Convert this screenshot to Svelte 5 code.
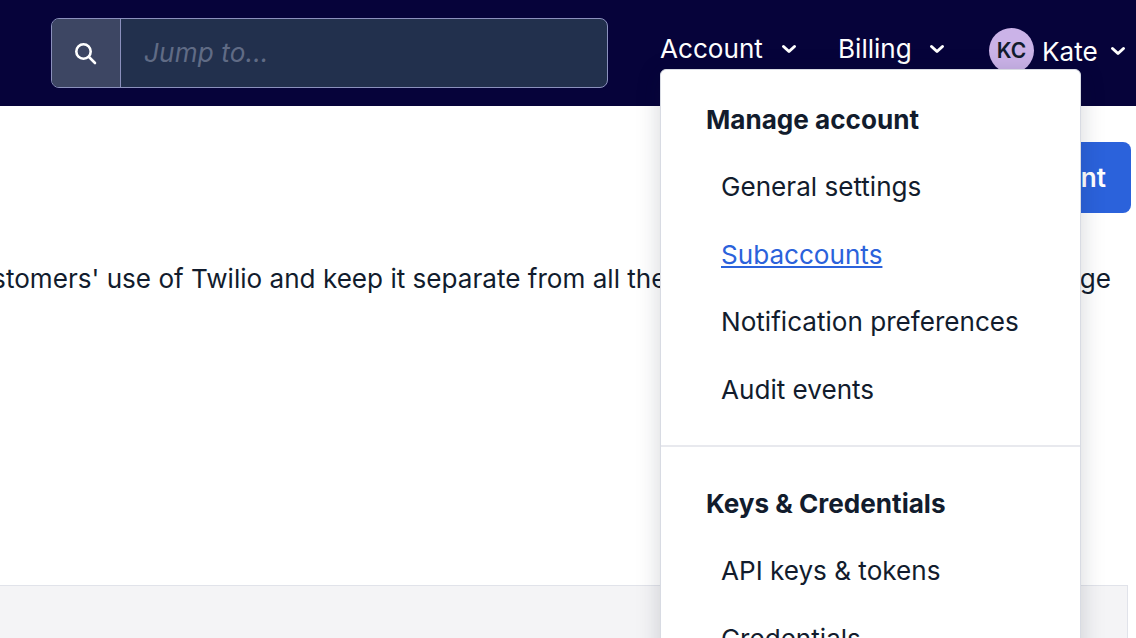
<script>
  const accountMenu = [
    { title: 'Manage account', links: ['General settings', 'Subaccounts', 'Notification preferences', 'Audit events'] },
    { title: 'Keys & Credentials', links: ['API keys & tokens', 'Credentials'] }
  ];
  const activeLink = 'Subaccounts';
</script>

{#snippet chevron()}
  <svg class="chevron" width="16" height="16" viewBox="0 0 16 16" fill="none" stroke="currentColor" stroke-width="3" stroke-linecap="round" stroke-linejoin="round">
    <path d="M2.5 5.5 8 10.5l5.5-5" />
  </svg>
{/snippet}

<div class="page">
  <header class="topbar">
    <div class="search">
      <div class="search-icon">
        <svg width="26" height="26" viewBox="0 0 26 26" fill="none" stroke="currentColor" stroke-width="2.6" stroke-linecap="round">
          <circle cx="11.5" cy="11.5" r="7.2" />
          <path d="M17 17l6 6" />
        </svg>
      </div>
      <span class="placeholder">Jump to...</span>
    </div>
    <nav class="nav">
      <button class="nav-item account"><span>Account</span>{@render chevron()}</button>
      <button class="nav-item billing"><span>Billing</span>{@render chevron()}</button>
      <button class="nav-item user">
        <span class="avatar">KC</span><span class="user-name">Kate</span>{@render chevron()}
      </button>
    </nav>
  </header>

  <main class="content">
    <div class="actions">
      <button class="primary">Create new subaccount</button>
    </div>
    <div class="intro">
      <span class="intro-left">Use subaccounts to track your customers' use of Twilio and keep it separate from all the</span>
      <span class="intro-right">manage</span>
    </div>
    <div class="table-head"></div>
  </main>

  <div class="dropdown">
    {#each accountMenu as section}
      <section class="menu-section">
        <h3>{section.title}</h3>
        <ul>
          {#each section.links as link}
            <li><a href="#top" class:active={link === activeLink}>{link}</a></li>
          {/each}
        </ul>
      </section>
    {/each}
  </div>
</div>

<style>
  :global(body) {
    margin: 0;
    overflow: hidden;
  }

  .page {
    position: relative;
    width: 1136px;
    height: 638px;
    overflow: hidden;
    background: #fff;
    font-family: Inter, "Liberation Sans", sans-serif;
    font-size: 26.1px;
    color: #121c2d;
  }

  .topbar {
    display: flex;
    height: 106px;
    box-sizing: border-box;
    padding: 18px 0 0 51px;
    background: #06033a;
    color: #fff;
  }

  .search {
    display: flex;
    width: 557px;
    height: 70px;
    box-sizing: border-box;
    border: 1.5px solid #8b90bd;
    border-radius: 8px;
    background: #22304d;
    overflow: hidden;
  }

  .search-icon {
    display: flex;
    align-items: center;
    justify-content: center;
    width: 69px;
    flex-shrink: 0;
    padding-right: 3px;
    box-sizing: border-box;
    border-right: 1.5px solid #8b90bd;
    background: #3d4663;
    color: #fff;
  }

  .placeholder {
    align-self: center;
    margin: 0 0 2px 23px;
    font-style: italic;
    letter-spacing: 0.15px;
    color: #606b85;
  }

  .nav {
    display: flex;
    align-items: flex-start;
    margin-left: 52px;
  }

  .nav-item {
    display: flex;
    align-items: center;
    padding: 0;
    border: 0;
    background: none;
    color: inherit;
    font: inherit;
  }

  .account {
    width: 178px;
    margin-top: 15px;
  }

  .billing {
    width: 151px;
    margin-top: 15px;
  }

  .account .chevron {
    margin-left: 18px;
  }

  .billing .chevron {
    margin-left: 17px;
  }

  .user {
    margin-top: 10px;
  }

  .user-name {
    margin-top: 1px;
  }

  .user .chevron {
    margin-left: 12px;
  }

  .avatar {
    display: flex;
    align-items: center;
    justify-content: center;
    width: 45px;
    height: 45px;
    margin-right: 8px;
    border-radius: 50%;
    background: #cbb3e8;
    color: #121c2d;
    font-size: 21px;
    font-weight: 600;
  }

  .content {
    display: flex;
    flex-direction: column;
    height: 532px;
  }

  .actions {
    display: flex;
    justify-content: flex-end;
    padding: 36px 5px 0 0;
  }

  .primary {
    height: 71px;
    padding: 0 25px;
    border: 0;
    border-radius: 8px;
    background: #2b62db;
    color: #fff;
    font: inherit;
    font-weight: 600;
  }

  .intro {
    display: flex;
    justify-content: space-between;
    margin-top: 46px;
    padding-right: 25px;
    line-height: 40px;
    white-space: nowrap;
  }

  .intro-left {
    margin-left: -423px;
  }

  .table-head {
    flex: 1;
    margin: 286px 8px 0 0;
    border-top: 1.5px solid #e1e3ea;
    border-right: 1.5px solid #e1e3ea;
    background: #f4f4f6;
  }

  .dropdown {
    position: absolute;
    top: 69px;
    left: 660px;
    width: 421px;
    height: 640px;
    box-sizing: border-box;
    border: 1px solid #d8dbe3;
    border-radius: 6px;
    background: #fff;
    box-shadow: 0 4px 24px rgba(18, 28, 45, 0.18);
  }

  .menu-section {
    padding: 16px 45px 22px;
  }

  .menu-section + .menu-section {
    border-top: 2px solid #e8e9ee;
    padding-top: 23px;
  }

  h3 {
    display: flex;
    align-items: center;
    height: 66.9px;
    margin: 0;
    font-size: 26.1px;
    font-weight: 700;
  }

  ul {
    margin: 0;
    padding: 0 0 0 15px;
    list-style: none;
  }

  li {
    display: flex;
    align-items: center;
    height: 67.6px;
  }

  a {
    color: inherit;
    text-decoration: none;
  }

  a.active {
    color: #2b62db;
    text-decoration: underline;
  }
</style>
